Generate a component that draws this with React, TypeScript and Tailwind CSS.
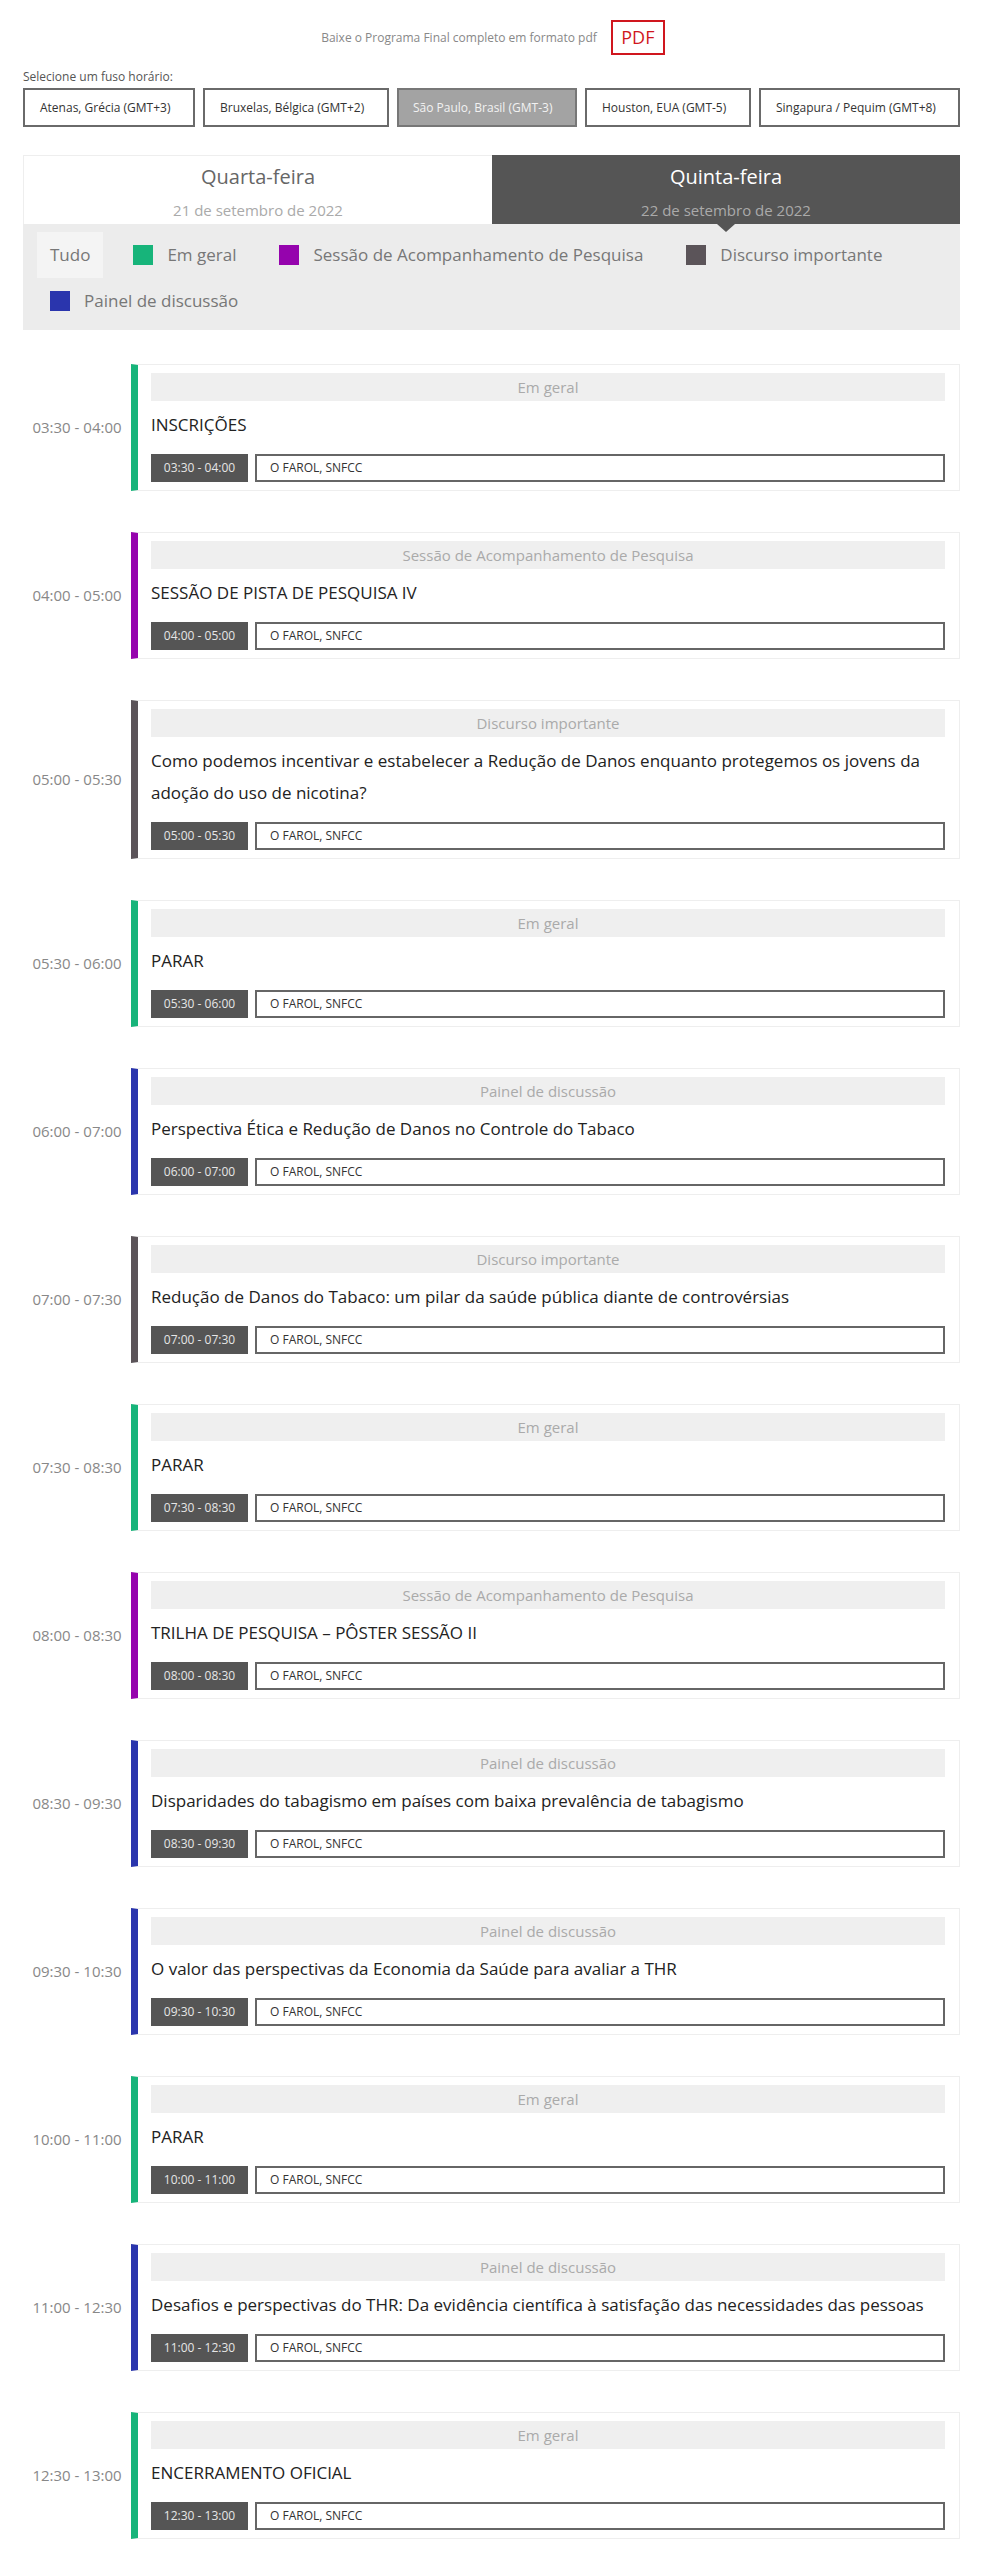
import React from "react";

type Cat = "geral" | "sessao" | "discurso" | "painel";

const CATS: Record<Cat, { label: string; border: string; bg: string }> = {
  geral: { label: "Em geral", border: "border-l-[#17b47a]", bg: "bg-[#17b47a]" },
  sessao: { label: "Sessão de Acompanhamento de Pesquisa", border: "border-l-[#9503ad]", bg: "bg-[#9503ad]" },
  discurso: { label: "Discurso importante", border: "border-l-[#5b5459]", bg: "bg-[#5b5459]" },
  painel: { label: "Painel de discussão", border: "border-l-[#2a35ad]", bg: "bg-[#2a35ad]" },
};

const EVENTS: { time: string; cat: Cat; title: string }[] = [
  { time: "03:30 - 04:00", cat: "geral", title: "INSCRIÇÕES" },
  { time: "04:00 - 05:00", cat: "sessao", title: "SESSÃO DE PISTA DE PESQUISA IV" },
  {
    time: "05:00 - 05:30",
    cat: "discurso",
    title:
      "Como podemos incentivar e estabelecer a Redução de Danos enquanto protegemos os jovens da adoção do uso de nicotina?",
  },
  { time: "05:30 - 06:00", cat: "geral", title: "PARAR" },
  { time: "06:00 - 07:00", cat: "painel", title: "Perspectiva Ética e Redução de Danos no Controle do Tabaco" },
  {
    time: "07:00 - 07:30",
    cat: "discurso",
    title: "Redução de Danos do Tabaco: um pilar da saúde pública diante de controvérsias",
  },
  { time: "07:30 - 08:30", cat: "geral", title: "PARAR" },
  { time: "08:00 - 08:30", cat: "sessao", title: "TRILHA DE PESQUISA – PÔSTER SESSÃO II" },
  {
    time: "08:30 - 09:30",
    cat: "painel",
    title: "Disparidades do tabagismo em países com baixa prevalência de tabagismo",
  },
  {
    time: "09:30 - 10:30",
    cat: "painel",
    title: "O valor das perspectivas da Economia da Saúde para avaliar a THR",
  },
  { time: "10:00 - 11:00", cat: "geral", title: "PARAR" },
  {
    time: "11:00 - 12:30",
    cat: "painel",
    title:
      "Desafios e perspectivas do THR: Da evidência científica à satisfação das necessidades das pessoas",
  },
  { time: "12:30 - 13:00", cat: "geral", title: "ENCERRAMENTO OFICIAL" },
];

const ZONES: { label: string; w: string; active?: boolean }[] = [
  { label: "Atenas, Grécia (GMT+3)", w: "w-[172px]" },
  { label: "Bruxelas, Bélgica (GMT+2)", w: "w-[186px]" },
  { label: "São Paulo, Brasil (GMT-3)", w: "w-[180px]", active: true },
  { label: "Houston, EUA (GMT-5)", w: "w-[166px]" },
  { label: "Singapura / Pequim (GMT+8)", w: "w-[201px]" },
];

export default function App() {
  return (
    <div className="w-[986px] bg-white pt-[20px] pb-[23px] font-['Open_Sans',_'Liberation_Sans',_sans-serif]">
      <div className="flex h-[35px] items-center justify-center gap-[14px]">
        <span className="text-[12px] text-[#888]">Baixe o Programa Final completo em formato pdf</span>
        <span className="flex h-[35px] w-[54px] items-center justify-center border-2 border-[#d0161e] text-[18px] text-[#d0161e]">
          PDF
        </span>
      </div>

      <div className="pl-[23px]">
        <div className="mt-[14px] text-[12px] leading-[16px] text-[#555]">Selecione um fuso horário:</div>
        <div className="mt-[3px] flex gap-[8px]">
          {ZONES.map((z) => (
            <div
              key={z.label}
              className={
                z.active
                  ? `flex h-[39px] ${z.w} shrink-0 items-center whitespace-nowrap border-2 border-[#777] bg-[#a3a3a3] pl-[14px] text-[12px] text-[#f2f2f2]`
                  : `flex h-[39px] ${z.w} shrink-0 items-center whitespace-nowrap border-2 border-[#6a6a6a] bg-white pl-[15px] text-[12px] text-[#333]`
              }
            >
              {z.label}
            </div>
          ))}
        </div>

        <div className="mt-[28px] w-[937px]">
          <div className="flex h-[69px]">
            <div className="flex flex-1 flex-col items-center border border-b-0 border-r-0 border-[#eee] bg-white">
              <div className="mt-[9px] text-[20px] leading-[24px] text-[#666]">Quarta-feira</div>
              <div className="mt-[11px] text-[15px] leading-[20px] text-[#aaa]">21 de setembro de 2022</div>
            </div>
            <div className="relative flex flex-1 flex-col items-center bg-[#555]">
              <div className="mt-[10px] text-[20px] leading-[24px] text-white">Quinta-feira</div>
              <div className="mt-[11px] text-[15px] leading-[20px] text-[#aaa]">22 de setembro de 2022</div>
              <div className="absolute bottom-[-8px] left-1/2 h-0 w-0 -translate-x-1/2 border-x-[9px] border-t-[8px] border-x-transparent border-t-[#555]" />
            </div>
          </div>
          <div className="flex flex-wrap bg-[#ececec] px-[14px] pt-[8px] pb-[6px] text-[17px] text-[#777]">
            <div className="mr-[17px] flex h-[46px] items-center bg-[#f4f4f4] px-[13px]">Tudo</div>
            {(Object.keys(CATS) as Cat[]).map((c) => (
              <div key={c} className="mr-[17px] flex h-[46px] items-center gap-[14px] px-[13px]">
                <span className={`h-[20px] w-[20px] ${CATS[c].bg}`} />
                <span>{CATS[c].label}</span>
              </div>
            ))}
          </div>
        </div>

        <div className="mt-[34px] flex w-[937px] flex-col gap-[41px]">
          {EVENTS.map((e, i) => (
            <div key={i} className="flex items-center">
              <div className="w-[108px] text-center text-[15px] text-[#888]">{e.time}</div>
              <div
                className={`flex-1 border border-[#eee] border-l-[7px] ${CATS[e.cat].border} pl-[13px] pr-[14px] py-[8px]`}
              >
                <div className="flex h-[28px] items-center justify-center bg-[#efefef] text-[15px] text-[#aaa]">
                  {CATS[e.cat].label}
                </div>
                <div className="mt-[8px] mb-[13px] text-[17px] leading-[32px] text-[#222]">{e.title}</div>
                <div className="flex h-[28px] gap-[7px]">
                  <div className="flex w-[97px] items-center justify-center bg-[#555] text-[12px] text-[#e6e6e6]">
                    {e.time}
                  </div>
                  <div className="flex flex-1 items-center border-2 border-[#666] pl-[13px] text-[12px] text-[#333]">
                    O FAROL, SNFCC
                  </div>
                </div>
              </div>
            </div>
          ))}
        </div>
      </div>
    </div>
  );
}
